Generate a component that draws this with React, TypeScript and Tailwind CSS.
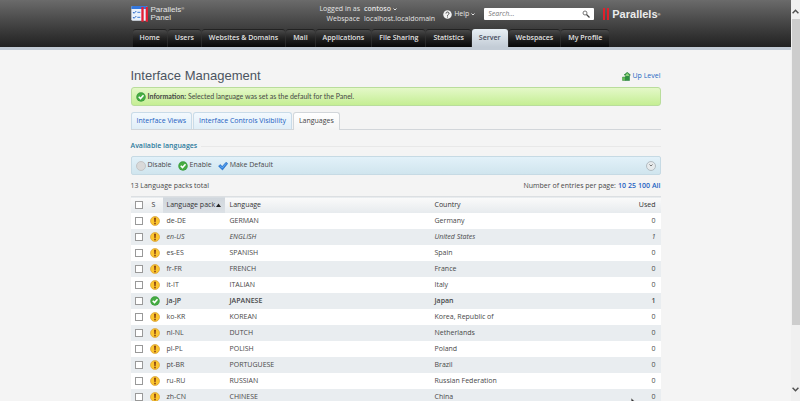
import type { ReactNode } from "react";

const menu = [
    "Home",
    "Users",
    "Websites & Domains",
    "Mail",
    "Applications",
    "File Sharing",
    "Statistics",
    "Server",
    "Webspaces",
    "My Profile",
];

const languages = [
    { pack: "de-DE", name: "GERMAN", country: "Germany", used: 0 },
    { pack: "en-US", name: "ENGLISH", country: "United States", used: 1, style: "italic" },
    { pack: "es-ES", name: "SPANISH", country: "Spain", used: 0 },
    { pack: "fr-FR", name: "FRENCH", country: "France", used: 0 },
    { pack: "it-IT", name: "ITALIAN", country: "Italy", used: 0 },
    { pack: "ja-JP", name: "JAPANESE", country: "Japan", used: 1, style: "font-semibold", active: true },
    { pack: "ko-KR", name: "KOREAN", country: "Korea, Republic of", used: 0 },
    { pack: "nl-NL", name: "DUTCH", country: "Netherlands", used: 0 },
    { pack: "pl-PL", name: "POLISH", country: "Poland", used: 0 },
    { pack: "pt-BR", name: "PORTUGUESE", country: "Brazil", used: 0 },
    { pack: "ru-RU", name: "RUSSIAN", country: "Russian Federation", used: 0 },
    { pack: "zh-CN", name: "CHINESE", country: "China", used: 0 },
];

const OkIcon = () => (
    <svg viewBox="0 0 20 20" className="size-[10px] shrink-0" aria-hidden="true">
        <circle cx="10" cy="10" r="9.5" fill="#3c9f3f" />
        <circle cx="10" cy="10" r="7.5" fill="#46ad42" />
        <path d="M5.5 9.5 9 13l6-6.5" fill="none" stroke="#fff" strokeWidth="3.2" />
    </svg>
);

const WarningIcon = () => (
    <svg viewBox="0 0 20 20" className="size-[10px] shrink-0" aria-hidden="true">
        <circle cx="10" cy="10" r="9" fill="#fcc62e" stroke="#d9a441" strokeWidth="1.5" />
        <path d="M8 3.5h4l-.7 8.5H8.7z" fill="#8a4412" />
        <circle cx="10" cy="15" r="1.8" fill="#8a4412" />
    </svg>
);

const DisableIcon = () => (
    <svg viewBox="0 0 20 20" className="size-[10px] shrink-0" aria-hidden="true">
        <circle cx="10" cy="10" r="9" fill="#d9d9d9" stroke="#bcbcbc" strokeWidth="1.5" />
    </svg>
);

const DefaultIcon = () => (
    <svg viewBox="0 0 20 20" className="size-[10px] shrink-0" aria-hidden="true">
        <path d="M1 10.5 4.5 7l4 4L16 2.5l3.5 2.5L9 18z" fill="#2f80dd" stroke="#1e62b8" strokeWidth="1" />
        <path d="M4 9.5 8.5 14l8-9.5" fill="none" stroke="#6fb4f5" strokeWidth="1.5" />
    </svg>
);

const UpLevelIcon = () => (
    <svg viewBox="0 0 18 18" className="size-[9px] shrink-0" aria-hidden="true">
        <path d="M1 10h6v7H1z" fill="#63bd55" stroke="#368b38" />
        <path d="M7 17V6H4L10.5.5 17 6h-2v11z" fill="#2e9242" stroke="#1f7434" />
        <path d="M7 8V6l3.500-4L14 6v2z" fill="#8fd47a" />
    </svg>
);

const Caret = () => (
    <svg viewBox="0 0 8 6" className="h-[3px] w-[4px]" aria-hidden="true">
        <path d="M1 1l3 3 3-3" fill="none" stroke="currentColor" strokeWidth="2" />
    </svg>
);

const PanelLogo = () => (
    <svg viewBox="0 0 54 51" className="h-[17px] w-[18px]" aria-hidden="true">
        <rect x="1" y="3" width="48" height="44" rx="4" fill="#e9f1fb" />
        <path d="M1 12V7a4 4 0 0 1 4-4h40a4 4 0 0 1 4 4v5z" fill="#3377dd" />
        <path d="M6 21l3 4 7-7M6 36l3 4 7-7" fill="none" stroke="#2c69c6" strokeWidth="3" />
        <path d="M19 22h9M19 37h9" stroke="#5b91dc" strokeWidth="4" />
        <path d="M31 6h7v44h-7zM44 6h7v44h-7z" fill="#e21f35" />
    </svg>
);

const ToolButton = ({ icon, children }: { icon: ReactNode; children: ReactNode }) => (
    <button type="button" className="flex items-center gap-[2px]">
        {icon}
        {children}
    </button>
);

const Check = ({ label }: { label: string }) => (
    <input
        type="checkbox"
        aria-label={label}
        className="block size-[8px] appearance-none border border-[#999] bg-white checked:bg-[#2f80dd]"
    />
);

const Header = () => (
    <header className="border-b-[3px] border-[#c3ccd6] bg-linear-to-b from-[#6b6b6b] to-[#222]">
        <div className="mx-auto flex max-w-[530px] flex-col">
            <div className="flex h-[29px] items-start text-[#e4e4e4]">
                <a href="#home" className="mt-[5px] flex gap-[2px] font-['Liberation_Sans',sans-serif] text-[8px] leading-[8px]">
                    <PanelLogo />
                    <span className="pt-px">
                        Parallels<sup className="text-[4px] leading-none">®</sup>
                        <br />
                        Panel
                    </span>
                </a>
                <dl className="mt-[4px] ml-auto grid grid-cols-[auto_auto] gap-x-[4px] leading-[10px]">
                    <dt className="text-right">Logged in as</dt>
                    <dd>
                        <button type="button" className="flex items-center gap-[2px] font-semibold">
                            contoso <Caret />
                        </button>
                    </dd>
                    <dt className="text-right">Webspace</dt>
                    <dd className="font-medium">localhost.localdomain</dd>
                </dl>
                <button type="button" className="mt-[9px] ml-[8px] flex items-center gap-[2px] leading-[10px] font-medium">
                    <svg viewBox="0 0 18 18" className="size-[9px]" aria-hidden="true">
                        <circle cx="9" cy="9" r="8.5" fill="#f2f2f2" />
                        <path d="M6 7c0-4 6-4 6 0 0 2-3 2-3 4.5M9 13v2" fill="none" stroke="#444" strokeWidth="2" />
                    </svg>
                    Help <Caret />
                </button>
                <form className="mt-[8px] ml-[9px] flex h-[12px] w-[110px] items-center rounded-[1px] bg-white px-[4px]">
                    <input
                        type="search"
                        aria-label="Search"
                        placeholder="Search..."
                        className="w-full min-w-0 text-[7px] text-[#444] italic outline-none placeholder:text-[#777]"
                    />
                    <button type="submit" aria-label="Find">
                        <svg viewBox="0 0 16 16" className="size-[8px]" aria-hidden="true">
                            <circle cx="6" cy="6" r="4" fill="none" stroke="#777" strokeWidth="2" />
                            <path d="M9 9l6 6" stroke="#444" strokeWidth="2.5" />
                        </svg>
                    </button>
                </form>
                <a href="#parallels" className="mt-[8px] ml-[9px] flex h-[12px] items-center gap-[2px] font-['Liberation_Sans',sans-serif] text-[11px] leading-[12px] font-bold text-[#ececec]">
                    <svg viewBox="0 0 7 12" className="h-[12px] w-[7px]" aria-hidden="true">
                        <path d="M0 0h2v12H0zM4 0h2v12H4z" fill="#e0202c" />
                    </svg>
                    <span>
                        Parallels<sup className="text-[4px] leading-none">®</sup>
                    </span>
                </a>
            </div>
            <nav className="flex gap-px pl-[2px] font-semibold">
                {menu.map((item) => (
                    <a
                        key={item}
                        href="#menu"
                        className={`flex h-[18px] items-center rounded-t-[3px] px-[7px] whitespace-nowrap ${
                            item === "Server"
                                ? "bg-linear-to-b from-[#e8eff4] to-[#c3ccd6] text-[#454c5c]"
                                : "border-t border-[#222] bg-linear-to-b from-[#494949] via-[#222] to-[#080808] text-[#e2e2e2]"
                        }`}
                    >
                        {item}
                    </a>
                ))}
            </nav>
        </div>
    </header>
);

const LanguageTable = () => (
    <table className="mt-[5px] w-full table-fixed border-collapse text-left leading-[10px]">
        <colgroup>
            <col className="w-[16px]" />
            <col className="w-[16px]" />
            <col className="w-[62px]" />
            <col className="w-[205px]" />
            <col />
            <col className="w-[40px]" />
        </colgroup>
        <thead>
            <tr className="h-[16px] border-t border-[#dcdfe2] bg-linear-to-b from-[#fafafa] to-[#e7ebee] text-[#333]">
                <th className="pl-[4px]">
                    <Check label="Select all" />
                </th>
                <th className="pl-[5px] font-normal">S</th>
                <th className="bg-linear-to-b from-[#d0d6dc] to-[#dce1e6] pl-[4px] font-medium" aria-sort="ascending">
                    <button type="button" className="flex items-center gap-px whitespace-nowrap">
                        Language pack
                        <svg viewBox="0 0 10 8" className="h-[4px] w-[5px]" aria-hidden="true">
                            <path d="M0 8l5-7 5 7z" fill="#222" />
                        </svg>
                    </button>
                </th>
                <th className="pl-[5px] font-medium">Language</th>
                <th className="pl-[5px] font-medium">Country</th>
                <th className="pr-[5px] text-right font-medium">Used</th>
            </tr>
        </thead>
        <tbody>
            {languages.map((lang) => (
                <tr key={lang.pack} className={`h-[16px] odd:bg-white even:bg-[#e9edf0] ${lang.style ?? ""}`}>
                    <td className="pl-[4px]">
                        <Check label={lang.name} />
                    </td>
                    <td className="pl-[3px]">{lang.active ? <OkIcon /> : <WarningIcon />}</td>
                    <td className="pl-[4px]">{lang.pack}</td>
                    <td className="pl-[5px]">{lang.name}</td>
                    <td className="pl-[5px]">{lang.country}</td>
                    <td className="pr-[5px] text-right">{lang.used}</td>
                </tr>
            ))}
        </tbody>
    </table>
);

const Scrollbar = () => (
    <div className="flex w-[9px] shrink-0 flex-col items-center bg-[#f0f0f0] py-[9px] text-[#505050]">
        <svg viewBox="0 0 12 8" className="h-[5px] w-[7px] shrink-0" aria-hidden="true">
            <path d="M1 7l5-5 5 5" fill="none" stroke="currentColor" strokeWidth="2.5" />
        </svg>
        <div className="mt-[5px] h-4/5 w-[8px] bg-[#cdcdcd]" />
        <svg viewBox="0 0 12 8" className="mt-auto h-[5px] w-[7px] shrink-0" aria-hidden="true">
            <path d="M1 1l5 5 5-5" fill="none" stroke="currentColor" strokeWidth="2.5" />
        </svg>
    </div>
);

const App = () => {
    return (
        <div className="relative flex h-screen overflow-hidden bg-[#f4f4f4] font-['Open_Sans',sans-serif] text-[7px] text-[#484848]">
            <div className="min-w-0 flex-1">
                <Header />
                <main className="mx-auto max-w-[530px] pt-[17px]">
                    <div className="flex items-center justify-between">
                        <h1 className="font-['Liberation_Sans',sans-serif] text-[13px] leading-[18px] text-[#4c5461]">
                            Interface Management
                        </h1>
                        <a href="#up" className="flex items-center gap-[2px] font-medium text-[#2569c3]">
                            <UpLevelIcon />
                            Up Level
                        </a>
                    </div>
                    <p className="mt-[2px] flex h-[19px] items-center gap-[2px] rounded-[3px] border border-[#b9dd9b] bg-linear-to-b from-[#e4f8c8] to-[#c5ee93] px-[4px] font-['Lato',sans-serif]">
                        <OkIcon />
                        <span>
                            <b>Information:</b> Selected language was set as the default for the Panel.
                        </span>
                    </p>
                    <nav className="mt-[6px] flex h-[18px] gap-px border-b border-[#d2d6da] font-medium text-[#1c61c2]">
                        <a href="#views" className="flex items-center rounded-t-[3px] border border-b-0 border-[#c9dbe8] bg-linear-to-b from-[#f3f9fe] to-[#e0eef7] px-[5px]">
                            Interface Views
                        </a>
                        <a href="#controls" className="flex items-center rounded-t-[3px] border border-b-0 border-[#c9dbe8] bg-linear-to-b from-[#f3f9fe] to-[#e0eef7] px-[5px]">
                            Interface Controls Visibility
                        </a>
                        <a href="#languages" className="flex h-[18px] items-center rounded-t-[3px] border border-b-0 border-[#d2d6da] bg-linear-to-b from-white to-[#f4f4f4] px-[5px] text-[#444]">
                            Languages
                        </a>
                    </nav>
                    <h2 className="mt-[11px] flex items-center gap-[4px] leading-[10px] font-semibold text-[#2b7a9c]">
                        Available languages
                        <span className="h-px flex-1 bg-[#e8e8e8]" />
                    </h2>
                    <div className="mt-[5px] flex h-[19px] items-center gap-[6px] rounded-[2px] border border-[#c6dae4] bg-linear-to-b from-[#e2f1f9] to-[#d0e5ee] px-[4px]">
                        <ToolButton icon={<DisableIcon />}>Disable</ToolButton>
                        <ToolButton icon={<OkIcon />}>Enable</ToolButton>
                        <ToolButton icon={<DefaultIcon />}>Make Default</ToolButton>
                        <button
                            type="button"
                            aria-label="More actions"
                            className="ml-auto flex size-[10px] items-center justify-center rounded-full border border-[#b2bcc2] bg-[#e6eaec] text-[#777]"
                        >
                            <Caret />
                        </button>
                    </div>
                    <div className="mt-[6px] flex justify-between leading-[10px]">
                        <span>13 Language packs total</span>
                        <span className="flex gap-[2px]">
                            Number of entries per page:
                            <a href="#10" className="font-semibold text-[#1c61c2]">10</a>
                            <a href="#25" className="font-semibold text-[#1c61c2]">25</a>
                            <a href="#100" className="font-semibold text-[#1c61c2]">100</a>
                            <a href="#all" className="font-semibold text-[#1c61c2]">All</a>
                        </span>
                    </div>
                    <LanguageTable />
                </main>
            </div>
            <Scrollbar />
            {/* mouse pointer */}
            <svg viewBox="0 0 8 12" className="absolute top-[398px] left-[631px] h-[10px] w-[7px]" aria-hidden="true">
                <path d="M0 0v10l2.5-2.5L4 11l1.5-1L4 7h3.5z" fill="#333" stroke="#fff" strokeWidth=".5" />
            </svg>
        </div>
    );
};
export default App;
